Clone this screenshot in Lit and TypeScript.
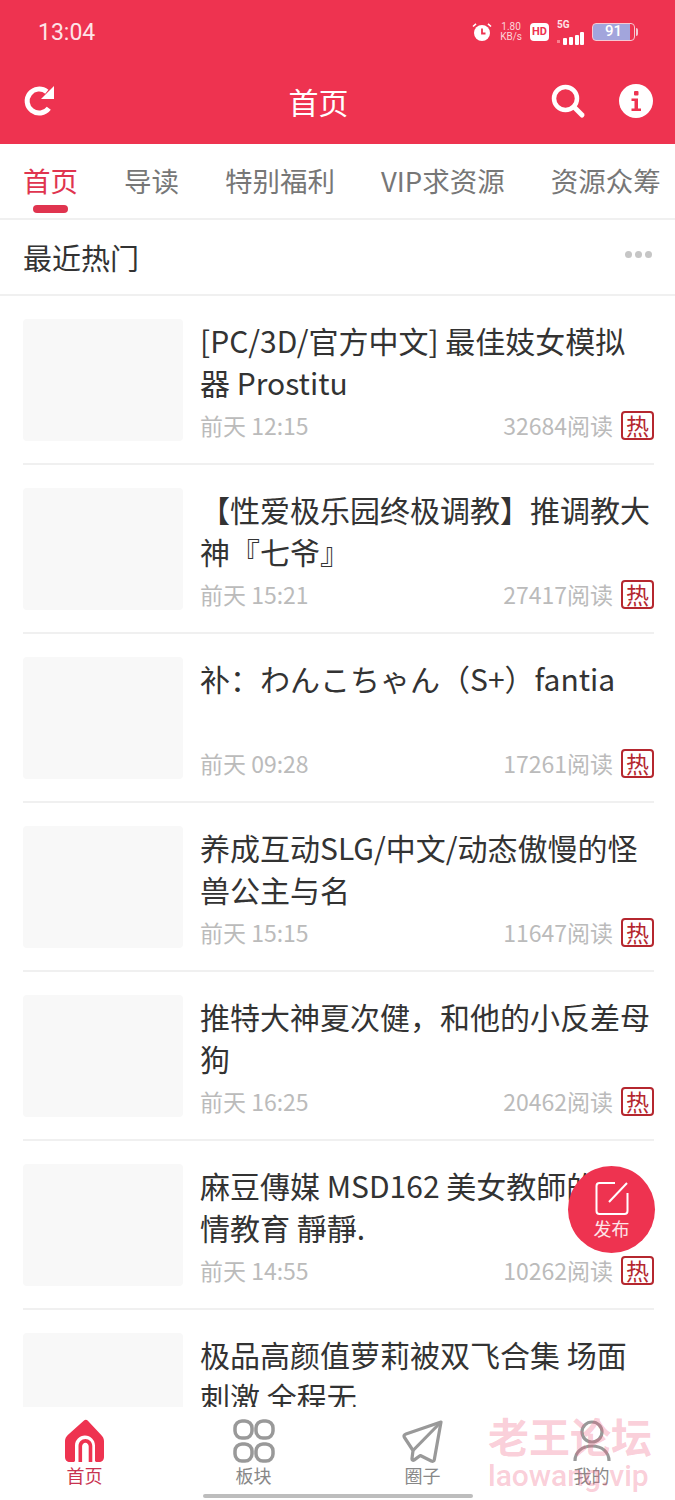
import { LitElement, css, html, svg } from "lit";
import { customElement } from "lit/decorators.js";

interface Post {
  title: string;
  time: string;
  reads: number;
}

const POSTS: Post[] = [
  { title: "[PC/3D/官方中文] 最佳妓女模拟器 Prostitu", time: "前天 12:15", reads: 32684 },
  { title: "【性爱极乐园终极调教】推调教大神『七爷』", time: "前天 15:21", reads: 27417 },
  { title: "补：わんこちゃん（S+）fantia", time: "前天 09:28", reads: 17261 },
  { title: "养成互动SLG/中文/动态傲慢的怪兽公主与名", time: "前天 15:15", reads: 11647 },
  { title: "推特大神夏次健，和他的小反差母狗", time: "前天 16:25", reads: 20462 },
  { title: "麻豆傳媒 MSD162 美女教師的性情教育 靜靜.", time: "前天 14:55", reads: 10262 },
  { title: "极品高颜值萝莉被双飞合集 场面刺激 全程无", time: "前天 11:02", reads: 9875 },
];

const TABS = ["首页", "导读", "特别福利", "VIP求资源", "资源众筹"];

const ICON_HOME = svg`<path d="M21 1.5c1-1 2.6-1 3.6 0l13.6 14.6c1.4 1.5 2.8 3.4 2.8 5.9v16c0 3-2 5-5 5h-2.6c-.9 0-1.4-.5-1.4-1.4V26.5c0-5.500-4.500-10-10-10s-10 4.500-10 10v15.100c0 .9-.5 1.400-1.400 1.400H7c-3 0-5-2-5-5V22c0-2.500 1.400-4.400 2.800-5.900z" fill="#ee3350"/><path d="M15.500 43V27c0-3.900 3.100-7 6.900-7s6.900 3.100 6.900 7v16h-3.600V27.500c0-2-1.400-3.800-3.300-3.800s-3.300 1.800-3.300 3.800V43z" fill="#ee3350"/>`;

@customElement("app-root")
export class AppRoot extends LitElement {
  private statusBar() {
    return html`
      <div class="status">
        <span class="clock">13:04</span>
        <div class="status-right">
          <svg width="20" height="20" viewBox="0 0 20 20">
            <circle cx="10" cy="11" r="8" fill="#fff" />
            <path d="M10 6.500V11.500H13.500" fill="none" stroke="#ee3350" stroke-width="1.800" />
            <path d="M1 4.500 4 1.800M19 4.500 16 1.800" stroke="#fff" stroke-width="1.600" />
          </svg>
          <div class="speed"><span>1.80</span><span>KB/s</span></div>
          <span class="hd">HD</span>
          <div class="signal">
            <span class="five-g">5G</span>
            <svg width="27" height="13" viewBox="0 0 27 13">
              <rect x="0" y="8" width="3" height="3" fill="#f9808f" />
              <rect x="6" y="6" width="4" height="7" rx="1" fill="#fff" />
              <rect x="12" y="5" width="4" height="8" rx="1" fill="#fff" />
              <rect x="18" y="3" width="4" height="10" rx="1" fill="#fff" />
              <rect x="23" y="0" width="4" height="13" rx="1" fill="#fff" />
            </svg>
          </div>
          <div class="battery"><span class="cell">91</span><span class="nub"></span></div>
        </div>
      </div>
    `;
  }

  private navBar() {
    return html`
      <div class="nav">
        <svg width="34" height="34" viewBox="0 0 34 34" class="nav-refresh">
          <path d="M25.800 24.200A12 12 0 1 1 23.800 7.800" fill="none" stroke="#fff" stroke-width="5" />
          <path d="M31 2v13H18z" fill="#fff" />
        </svg>
        <span class="nav-title">首页</span>
        <svg width="36" height="36" viewBox="0 0 36 36" class="nav-search">
          <circle cx="15.500" cy="15.500" r="11.500" fill="none" stroke="#fff" stroke-width="4.500" />
          <path d="M24 24l8 8" stroke="#fff" stroke-width="5" stroke-linecap="round" />
        </svg>
        <span class="nav-info">
          <svg width="34" height="34" viewBox="0 0 34 34">
            <circle cx="17" cy="17" r="17" fill="#fff" />
            <rect x="15" y="7" width="4.500" height="4.500" rx="1" fill="#ee3350" />
            <path d="M12.500 14.500h6.500v10h3v2.500H12.500v-2.500h3v-7.500h-3z" fill="#ee3350" />
          </svg>
        </span>
      </div>
    `;
  }

  private tabs() {
    return html`
      <div class="tabs">
        ${TABS.map(
          (t, i) => html`<div class="tab ${i === 0 ? "on" : ""}">${t}</div>`
        )}
      </div>
    `;
  }

  private row(p: Post) {
    return html`
      <div class="row">
        <div class="thumb"></div>
        <div class="body">
          <div class="title">${p.title}</div>
          <div class="meta">
            <span class="time">${p.time}</span>
            <span class="reads">${p.reads}阅读</span>
            <span class="hot">热</span>
          </div>
        </div>
      </div>
    `;
  }

  private tabBar() {
    return html`
      <div class="bottom">
        <div class="item on">
          <svg width="44" height="44" viewBox="0 0 44 44">${ICON_HOME}</svg>
          <span>首页</span>
        </div>
        <div class="item">
          <svg width="44" height="44" viewBox="0 0 44 44" fill="none" stroke="#999" stroke-width="3.500">
            <rect x="3" y="2" width="17" height="17" rx="7" />
            <rect x="24" y="2" width="17" height="17" rx="7" />
            <rect x="3" y="25" width="17" height="17" rx="7" />
            <rect x="24" y="25" width="17" height="17" rx="7" />
          </svg>
          <span>板块</span>
        </div>
        <div class="item">
          <svg width="44" height="44" viewBox="0 0 44 44" fill="none" stroke="#999" stroke-width="3.200" stroke-linejoin="round">
            <path d="M40 3 5 15c-2 .7-2.500 2-1.500 3.500l8.500 13-1 8c-.2 1.700 1 2.300 2.300 1.400l6-4.400 11 5.500c1.500.7 2.700.2 3-1.400z" />
            <path d="M40 3 12 31.500" />
          </svg>
          <span>圈子</span>
        </div>
        <div class="item">
          <svg width="44" height="44" viewBox="0 0 44 44" fill="none" stroke="#999" stroke-width="3.200">
            <circle cx="22" cy="13" r="10" />
            <path d="M5 42c0-9 7-15 17-15s17 6 17 15" />
          </svg>
          <span>我的</span>
        </div>
      </div>
      <div class="home-bar"></div>
    `;
  }

  render() {
    return html`
      <div class="page">
        <header>${this.statusBar()}${this.navBar()}</header>
        ${this.tabs()}
        <div class="section">
          <span>最近热门</span>
          <span class="dots"><i></i><i></i><i></i></span>
        </div>
        <div class="list">${POSTS.map((p) => this.row(p))}</div>
        ${this.tabBar()}
        <div class="fab">
          <svg width="36" height="36" viewBox="0 0 36 36" fill="none" stroke="#fff" stroke-width="2">
            <path d="M21 3H5.500C3.500 3 2.500 4 2.500 6v25c0 2 1 3 3 3h25c2 0 3-1 3-3V13" />
            <path d="M33 3 15 22" />
          </svg>
          <span>发布</span>
        </div>
        <div class="mark">
          <div class="mark-cn">老王论坛</div>
          <div class="mark-en">laowang.vip</div>
        </div>
      </div>
    `;
  }

  static styles = css`
    :host {
      display: block;
      font-family: "Noto Sans CJK SC", "Noto Sans", sans-serif;
      color: #333;
    }
    .page {
      position: relative;
      height: 1500px;
      overflow: hidden;
      background: #fff;
    }
    header {
      height: 144px;
      background: #ee3350;
      color: #fff;
      display: flex;
      flex-direction: column;
    }
    .status {
      height: 64px;
      display: flex;
      align-items: center;
      justify-content: space-between;
      padding: 0 37px 0 38px;
    }
    .clock {
      font-family: Roboto, sans-serif;
      font-size: 23px;
      color: #fde4e8;
    }
    .status-right {
      display: flex;
      align-items: center;
      gap: 8px;
    }
    .speed {
      display: flex;
      flex-direction: column;
      align-items: center;
      font-family: Roboto, sans-serif;
      font-size: 10px;
      line-height: 10px;
      color: #fbd5da;
    }
    .hd {
      width: 19px;
      height: 18px;
      border-radius: 4px;
      background: #fff;
      color: #ee3350;
      font: 700 11px/18px Roboto, sans-serif;
      text-align: center;
    }
    .signal {
      width: 27px;
      height: 25px;
      position: relative;
    }
    .signal svg {
      position: absolute;
      left: 0;
      bottom: 0;
    }
    .five-g {
      position: absolute;
      left: 0;
      top: -1px;
      font: 700 10px/12px Roboto, sans-serif;
      color: #fde4e8;
    }
    .battery {
      display: flex;
      align-items: center;
      gap: 1px;
    }
    .cell {
      width: 43px;
      height: 18px;
      box-sizing: border-box;
      border: 1.500px solid #f5c9d2;
      border-radius: 4px;
      background: linear-gradient(90deg, #a2a5dc 90%, #ee3350 90%);
      color: #fff;
      font: 500 15px/15px Roboto, sans-serif;
      text-align: center;
    }
    .nub {
      width: 2px;
      height: 8px;
      border-radius: 0 2px 2px 0;
      background: #f5c9d2;
    }
    .nav {
      flex: 1;
      position: relative;
      display: flex;
      align-items: center;
      padding: 0 22px 6px 23px;
    }
    .nav-title {
      flex: 1;
      text-align: center;
      font-size: 30px;
      line-height: 40px;
      padding-left: 30px;
    }
    .nav-search {
      margin-right: 33px;
    }
    .nav-info {
      display: flex;
    }
    .tabs {
      height: 76px;
      box-sizing: border-box;
      border-bottom: 2px solid #f0f0f0;
      display: flex;
      gap: 46px;
      padding: 0 0 0 23px;
      white-space: nowrap;
      overflow: hidden;
      font-size: 27.500px;
      color: #777;
    }
    .tab {
      position: relative;
      line-height: 72px;
    }
    .tab.on {
      color: #e0344f;
    }
    .tab.on::after {
      content: "";
      position: absolute;
      left: 10px;
      right: 10px;
      bottom: 5px;
      height: 8px;
      border-radius: 4px;
      background: #e0344f;
    }
    .section {
      height: 76px;
      box-sizing: border-box;
      border-bottom: 2px solid #f0f0f0;
      padding: 0 23px;
      display: flex;
      align-items: center;
      justify-content: space-between;
      font-size: 29px;
      color: #333;
    }
    .dots {
      display: flex;
      gap: 3px;
      margin-bottom: 6px;
    }
    .dots i {
      width: 7px;
      height: 7px;
      border-radius: 50%;
      background: #c6c6c6;
    }
    .list {
      padding: 0 21px 0 23px;
    }
    .row {
      height: 169px;
      box-sizing: border-box;
      padding: 23px 0;
      border-bottom: 2px solid #f0f0f0;
      display: flex;
      gap: 17px;
    }
    .thumb {
      width: 160px;
      height: 122px;
      flex: none;
      border-radius: 4px;
      background: #f8f8f8;
    }
    .body {
      flex: 1;
      min-width: 0;
      display: flex;
      flex-direction: column;
      justify-content: space-between;
    }
    .title {
      font-size: 30px;
      line-height: 42px;
      color: #333;
      display: -webkit-box;
      -webkit-box-orient: vertical;
      -webkit-line-clamp: 2;
      overflow: hidden;
    }
    .meta {
      display: flex;
      align-items: center;
      font-size: 23px;
      line-height: 30px;
      color: #bbb;
    }
    .time {
      flex: 1;
    }
    .hot {
      margin-left: 8px;
      width: 33px;
      height: 29px;
      box-sizing: border-box;
      border: 2px solid #b5272f;
      border-radius: 4px;
      color: #b5272f;
      font-size: 23px;
      line-height: 25px;
      text-align: center;
    }
    .bottom {
      position: absolute;
      left: 0;
      right: 0;
      bottom: 0;
      height: 93px;
      background: #fff;
      display: grid;
      grid-template-columns: repeat(4, 169px);
    }
    .item {
      display: flex;
      flex-direction: column;
      align-items: center;
      padding-top: 12px;
      font-size: 18px;
      line-height: 24px;
      color: #888;
    }
    .item.on {
      color: #c93350;
    }
    .home-bar {
      position: absolute;
      left: 203px;
      bottom: 2px;
      width: 270px;
      height: 4px;
      border-radius: 2px;
      background: #bdbdbd;
    }
    .fab {
      position: absolute;
      left: 568px;
      top: 1166px;
      width: 87px;
      height: 87px;
      border-radius: 50%;
      background: #ee3350;
      color: #fde4e8;
      display: flex;
      flex-direction: column;
      align-items: center;
      padding-top: 14px;
      box-sizing: border-box;
      font-size: 18px;
      line-height: 24px;
    }
    .mark {
      position: absolute;
      left: 488px;
      top: 1411px;
      pointer-events: none;
      color: rgba(240, 90, 125, 0.3);
      font-weight: 700;
    }
    .mark-cn {
      font-size: 41px;
      line-height: 48px;
    }
    .mark-en {
      font-family: Roboto, sans-serif;
      font-weight: 500;
      font-size: 30px;
      line-height: 34px;
    }
  `;
}

declare global {
  interface HTMLElementTagNameMap {
    "app-root": AppRoot;
  }
}
